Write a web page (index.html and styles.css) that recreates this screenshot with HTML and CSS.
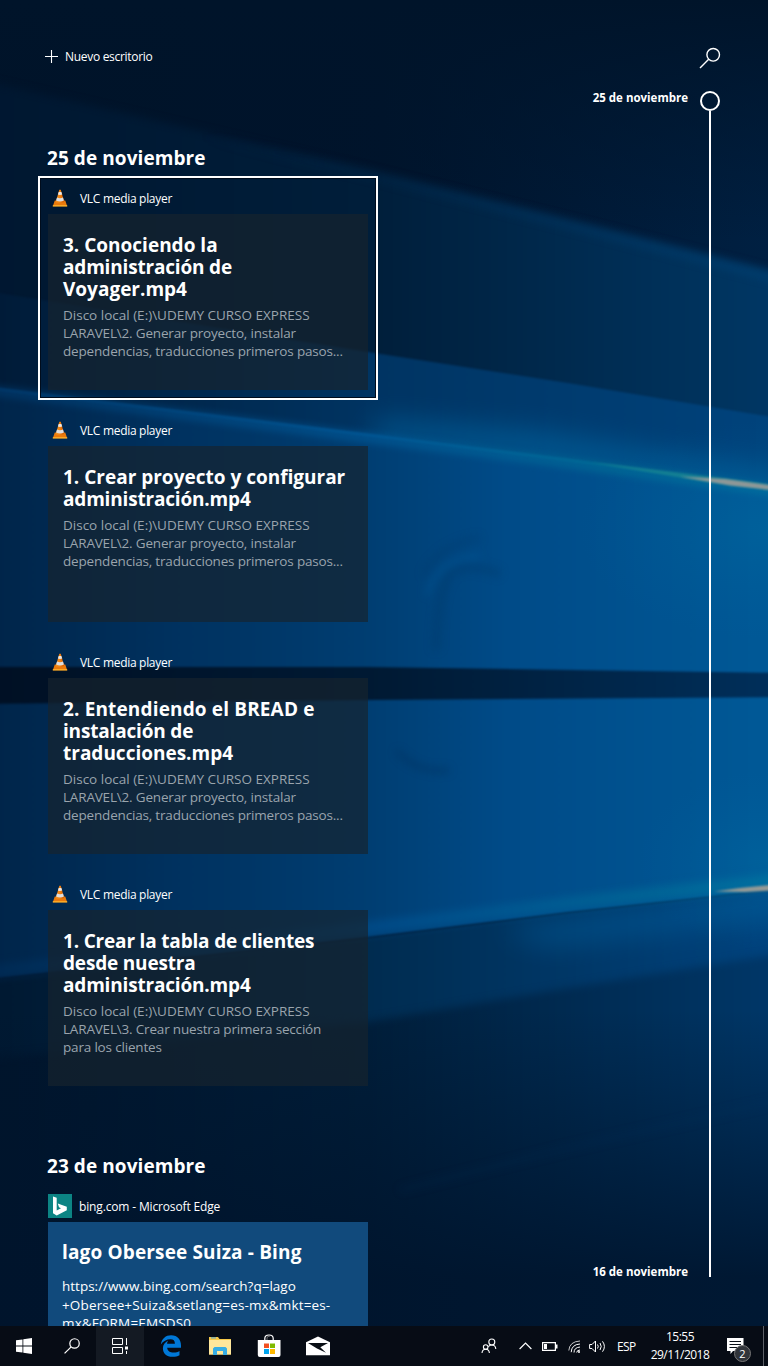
FILE: index.html
```html
<!DOCTYPE html>
<html lang="es">
<head>
<meta charset="utf-8">
<title>Vista de tareas</title>
<link rel="stylesheet" href="styles.css">
</head>
<body>
<svg class="wallpaper" viewBox="0 0 768 1366" preserveAspectRatio="none" aria-hidden="true">
  <defs>
    <linearGradient id="base" x1="0" x2="1" y1="0" y2="0"><stop offset="0" stop-color="#001228"/><stop offset=".5" stop-color="#00142c"/><stop offset="1" stop-color="#002042"/></linearGradient>
    <linearGradient id="topfade" x1="0" x2="0" y1="0" y2="1"><stop offset="0" stop-color="#00142a"/><stop offset="1" stop-color="#00142a" stop-opacity="0"/></linearGradient>
    <linearGradient id="bandA" x1="0" x2="1" y1="0" y2="0"><stop offset="0" stop-color="#001730"/><stop offset=".48" stop-color="#001e3a"/><stop offset="1" stop-color="#003866"/></linearGradient>
    <linearGradient id="edgeA" gradientUnits="userSpaceOnUse" x1="200" x2="768" y1="0" y2="0"><stop offset="0" stop-color="#004a80" stop-opacity="0"/><stop offset="1" stop-color="#004a80" stop-opacity=".4"/></linearGradient>
    <linearGradient id="bandB" x1="0" x2="1" y1="0" y2="0"><stop offset="0" stop-color="#001a36"/><stop offset=".48" stop-color="#003462"/><stop offset="1" stop-color="#00447e"/></linearGradient>
    <linearGradient id="pane" x1="0" x2="1" y1="0" y2="0"><stop offset="0" stop-color="#002448"/><stop offset=".25" stop-color="#003260"/><stop offset=".48" stop-color="#003e72"/><stop offset=".65" stop-color="#004b88"/><stop offset="1" stop-color="#005a98"/></linearGradient>
    <linearGradient id="lowerA" x1="0" x2="1" y1="0" y2="0"><stop offset="0" stop-color="#001830"/><stop offset=".48" stop-color="#002c50"/><stop offset="1" stop-color="#004480"/></linearGradient>
    <linearGradient id="lowerB" x1="0" x2="1" y1="0" y2="0"><stop offset="0" stop-color="#00142b"/><stop offset=".48" stop-color="#001e3a"/><stop offset="1" stop-color="#00386a"/></linearGradient>
    <linearGradient id="bar" x1="0" x2="1" y1="0" y2="0"><stop offset="0" stop-color="#001024"/><stop offset=".5" stop-color="#001a34"/><stop offset="1" stop-color="#00305c"/></linearGradient>
    <linearGradient id="ray" gradientUnits="userSpaceOnUse" x1="0" x2="768" y1="0" y2="0"><stop offset="0" stop-color="#003c70"/><stop offset=".48" stop-color="#005c9c"/><stop offset=".8" stop-color="#007298"/><stop offset="1" stop-color="#0078a0"/></linearGradient>
    <linearGradient id="lowray" gradientUnits="userSpaceOnUse" x1="0" x2="768" y1="0" y2="0"><stop offset="0" stop-color="#002e5a"/><stop offset=".5" stop-color="#005090"/><stop offset=".85" stop-color="#006c98"/><stop offset="1" stop-color="#0078a0"/></linearGradient>
    <linearGradient id="floor" x1="0" x2="0" y1="0" y2="1"><stop offset="0" stop-color="#00142c" stop-opacity="0"/><stop offset=".75" stop-color="#00142c"/><stop offset="1" stop-color="#00142c"/></linearGradient>
    <radialGradient id="glow"><stop offset="0" stop-color="#0078a8" stop-opacity=".65"/><stop offset="1" stop-color="#0068a4" stop-opacity="0"/></radialGradient>
    <filter id="b1" color-interpolation-filters="sRGB" filterUnits="userSpaceOnUse" x="-40" y="0" width="860" height="1366"><feGaussianBlur stdDeviation="1"/></filter>
    <filter id="b3" color-interpolation-filters="sRGB" filterUnits="userSpaceOnUse" x="-40" y="0" width="860" height="1366"><feGaussianBlur stdDeviation="4"/></filter>
    <filter id="b12" color-interpolation-filters="sRGB" filterUnits="userSpaceOnUse" x="-40" y="0" width="860" height="1366"><feGaussianBlur stdDeviation="14"/></filter>
  </defs>
  <rect width="768" height="1366" fill="url(#base)"/>
  <rect width="768" height="240" fill="url(#topfade)"/>
  <path d="M-20 80 L368 170 L568 220 L790 276 V440 H-20Z" fill="url(#bandA)" filter="url(#b3)"/>
  <path d="M200 136 L368 174 L568 224 L790 281" fill="none" stroke="url(#edgeA)" stroke-width="9" filter="url(#b3)"/>
  <path d="M-20 290 L368 352 L568 383 L790 420 V520 H-20Z" fill="url(#bandB)" filter="url(#b1)"/>
  <path d="M380 420 L540 432 L790 474 V500 L368 440Z" fill="#0064a0" opacity=".65" filter="url(#b12)"/>
  <path d="M-20 386 L368 434 L568 459 L790 489 V888 L568 912 L368 937 L-20 980Z" fill="url(#pane)" filter="url(#b1)"/>
  <path d="M-20 389 L368 438 L568 463 L790 493" fill="none" stroke="url(#ray)" stroke-width="8" opacity=".8" filter="url(#b3)"/>
  <path d="M-20 387 L368 435 L568 460 L790 490" fill="none" stroke="url(#ray)" stroke-width="2.5" opacity=".7" filter="url(#b1)"/>
  <path d="M-20 981 L368 938 L568 913 L790 888 V1130 H-20Z" fill="url(#lowerA)" filter="url(#b1)"/>
  <path d="M500 930 L790 890 V915 L550 945Z" fill="#0064a4" opacity=".5" filter="url(#b12)"/>
  <path d="M-20 1060 L368 1022 L568 988 L790 952 V1400 H-20Z" fill="url(#lowerB)" filter="url(#b3)"/>
  <path d="M-20 1010 H790 V1366 H-20Z" fill="url(#floor)" opacity=".88"/>
  <path d="M400 1190 L568 1148 L790 1098" fill="none" stroke="#00386a" stroke-opacity=".16" stroke-width="5" filter="url(#b3)"/>
  <path d="M-20 973 L368 928 L568 903 L790 879" fill="none" stroke="url(#lowray)" stroke-width="13" opacity=".7" filter="url(#b3)"/>
  <ellipse cx="768" cy="530" rx="190" ry="110" fill="url(#glow)" opacity=".4"/>
  <ellipse cx="768" cy="860" rx="130" ry="90" fill="url(#glow)" opacity=".4"/>
  <path d="M-20 667 H368 L790 673 V697 L368 700 L-20 704Z" fill="url(#bar)" filter="url(#b1)"/>
  <g fill="none" filter="url(#b3)"><path d="M436 650 Q438 585 452 572 Q470 562 500 574" stroke="#003767" stroke-opacity=".4" stroke-width="7"/><path d="M427 595 Q435 560 480 556" stroke="#0062a4" stroke-opacity=".4" stroke-width="4"/><path d="M424 575 Q438 545 480 538" stroke="#003767" stroke-opacity=".35" stroke-width="5"/><path d="M397 751 Q418 774 449 770" stroke="#002c58" stroke-opacity=".55" stroke-width="4"/></g>
  <path d="M590 462 L700 475 L768 484 V490 L700 481Z" fill="#25928e" opacity=".5" filter="url(#b1)"/>
  <path d="M680 476.5 L725 479 L790 488 V492 L730 485.5Z" fill="#a49c98" opacity=".85" filter="url(#b1)"/>
  <path d="M714 891.5 L740 888 L790 883 V889.5 L745 892Z" fill="#b0a394" opacity=".85" filter="url(#b1)"/>
</svg>

<svg class="sprite" aria-hidden="true">
  <defs>
    <linearGradient id="cone" x1="0" x2="1"><stop offset="0" stop-color="#f7941d"/><stop offset=".5" stop-color="#f08010"/><stop offset="1" stop-color="#d45c00"/></linearGradient>
    <symbol id="vlc" viewBox="0 0 16 18"><path d="M2.8 11.5 H13.2 L15.2 17.3 H.8Z" fill="#ea7a0c"/><path d="M.8 16.2 H15.2 V17.5 H.8Z" fill="#ffb52b"/><path d="M7.3 .8 H8.8 L12.2 13 Q8 15.3 3.8 13Z" fill="url(#cone)"/><path d="M6.7 3 H9.4 L10.2 5.6 Q8 6.5 5.9 5.6Z" fill="#e8e8e8"/><path d="M5 8.6 Q8 10 11 8.6 L11.9 11.5 Q8 13.6 4.1 11.5Z" fill="#dedede"/></symbol>
  </defs>
</svg>

<div class="desktop">
  <main class="task-view">
    <section class="activities">
      <button class="new-desktop"><svg width="13" height="13" viewBox="0 0 13 13"><path d="M6.5 0V13M0 6.5H13" stroke="#fff" stroke-width="1.1"/></svg><span>Nuevo escritorio</span></button>

      <h2 class="day first-day">25 de noviembre</h2>
      <div class="activity-list">
        <article class="activity selected">
          <header class="app"><svg class="app-icon"><use href="#vlc"/></svg><span>VLC media player</span></header>
          <div class="card"><h3>3. Conociendo la<br><span class="tight">administración de</span><br>Voyager.mp4</h3><p>Disco local (E:)\UDEMY CURSO EXPRESS<br><span class="tight">LARAVEL\2. Generar proyecto, instalar<br>dependencias, traducciones primeros pasos...</span></p></div>
        </article>
        <article class="activity">
          <header class="app"><svg class="app-icon"><use href="#vlc"/></svg><span>VLC media player</span></header>
          <div class="card"><h3>1. Crear proyecto y configurar<br><span class="tight">administración.mp4</span></h3><p>Disco local (E:)\UDEMY CURSO EXPRESS<br><span class="tight">LARAVEL\2. Generar proyecto, instalar<br>dependencias, traducciones primeros pasos...</span></p></div>
        </article>
        <article class="activity">
          <header class="app"><svg class="app-icon"><use href="#vlc"/></svg><span>VLC media player</span></header>
          <div class="card"><h3><span class="loose">2. Entendiendo el BREAD e</span><br><span class="tight">instalación de</span><br>traducciones.mp4</h3><p>Disco local (E:)\UDEMY CURSO EXPRESS<br><span class="tight">LARAVEL\2. Generar proyecto, instalar<br>dependencias, traducciones primeros pasos...</span></p></div>
        </article>
        <article class="activity">
          <header class="app"><svg class="app-icon"><use href="#vlc"/></svg><span>VLC media player</span></header>
          <div class="card"><h3 class="tight">1. Crear la tabla de clientes<br>desde nuestra<br>administración.mp4</h3><p>Disco local (E:)\UDEMY CURSO EXPRESS<br><span class="tight">LARAVEL\3. Crear nuestra primera sección<br>para los clientes</span></p></div>
        </article>
      </div>

      <h2 class="day next-day">23 de noviembre</h2>
      <article class="activity web">
        <header class="app"><svg class="bing-icon" viewBox="0 0 24 24"><rect width="24" height="24" fill="#0c8484"/><path d="M5 2.5 L8.7 3.8 V16.6 L13 14.2 L11 13.2 L9.8 9.6 L18.8 12.8 V16.2 L8.7 21.5 L5 19.2Z" fill="#fff"/></svg><span>bing.com - Microsoft Edge</span></header>
        <div class="card"><h3 class="loose">lago Obersee Suiza - Bing</h3><p>https://www.bing.com/search?q=lago<br><span class="loose">+Obersee+Suiza&amp;setlang=es-mx&amp;mkt=es-<br>mx&amp;FORM=EMSDS0</span></p></div>
      </article>
    </section>

    <aside class="timeline">
      <div class="dates"><span>25 de noviembre</span><span>16 de noviembre</span></div>
      <div class="track">
        <svg class="search" width="22" height="22" viewBox="0 0 22 22" fill="none" stroke="#fff" stroke-width="1.4"><circle cx="14.2" cy="7.8" r="6.3"/><path d="M9.7 12.3 L1 21"/></svg>
        <div class="knob"></div>
        <div class="line"></div>
      </div>
    </aside>
  </main>

  <footer class="taskbar">
    <div class="apps">
      <div class="slot"><svg width="16" height="16" viewBox="0 0 16 16" fill="#fff"><path d="M0 2.3 L6.5 1.4 V7.5 H0ZM7.3 1.3 L16 0 V7.5 H7.3ZM0 8.4 H6.5 V14.6 L0 13.7ZM7.3 8.4 H16 V16 L7.3 14.7Z"/></svg></div>
      <div class="slot"><svg width="16" height="16" viewBox="0 0 17 17" fill="none" stroke="#fff" stroke-width="1.3"><circle cx="11.2" cy="5.8" r="5"/><path d="M7.6 9.4 L.6 16.4"/></svg></div>
      <div class="slot active"><svg width="16" height="16" viewBox="0 0 16 16" fill="none" stroke="#fff"><path d="M.5 .5H10.5V6.5H.5ZM.5 9.5H10.5V15.5H.5ZM14.5 0V7M14.5 13V16"/><path d="M13 8.5H16V11.5H13Z" fill="#fff" stroke="none"/></svg></div>
      <div class="slot pinned"><svg width="22" height="22" viewBox="0 0 22 22"><path d="M.8 9.6 C1.7 3.5 5.8 .2 11.1 .2 C17.7 .2 21 5 21 10.2 V12.7 H7.2 C7.5 16.2 10.3 17.5 13.4 17.5 C16 17.5 18 16.8 19.5 15.9 V20.2 C17.6 21.2 15.3 21.8 12.5 21.8 C6.4 21.8 2.9 18.2 2.9 13.2 C2.9 9.6 5 7 8.2 5.4 C7.5 6.4 7.2 7.3 7.1 8.7 H14.9 C14.9 5.8 13.4 4.3 10.5 4.3 C6.6 4.3 3 6.3 .8 9.6Z" fill="#0078d7"/></svg></div>
      <div class="slot pinned"><svg width="22" height="18" viewBox="0 0 22 18"><path d="M0 0H9L10.5 2H22V17.5H0Z" fill="#f6c949"/><path d="M0 3H22V17.5H0Z" fill="#ffe79b"/><path d="M2 .9H7" stroke="#4a9fd6" stroke-width="1"/><path d="M4 18V11.5L5.5 10H16.5L18 11.5V18H14V14H8V18Z" fill="#37ade4"/></svg></div>
      <div class="slot pinned"><svg width="24" height="24" viewBox="0 0 24 24"><path d="M7.8 8V4.5C7.8 2 9.5 1 12 1S16.2 2 16.2 4.5V8" fill="none" stroke="#fff" stroke-width="1.2"/><path d="M10 8V4Q10 2 13 2" fill="none" stroke="#999" stroke-width=".7"/><path d="M.8 6H23.5V21Q23.5 23 21.5 23H2.8Q.8 23 .8 21Z" fill="#fff"/><path d="M7 9.5H12V14H7Z" fill="#f25022"/><path d="M13 9.5H18V14H13Z" fill="#7fba00"/><path d="M7 15H12V20H7Z" fill="#00a4ef"/><path d="M13 15H18V20H13Z" fill="#ffb900"/></svg></div>
      <div class="slot pinned"><svg width="24" height="20" viewBox="0 0 24 20"><path d="M0 6.3 L12 .5 L24 6.3 V19.3H0Z" fill="#fff"/><path d="M2 7 H22 L14.3 11.3 L20 16.8 L11 12.5Z" fill="#080d14"/></svg></div>
    </div>
    <div class="tray">
      <svg class="people" width="16" height="16" viewBox="0 0 16 16" fill="none" stroke="#fff" stroke-width="1.1"><circle cx="10.8" cy="4" r="3"/><circle cx="4.7" cy="9" r="2.3"/><path d="M1 15Q1.4 11.3 4.7 11.3T8.4 15M7.4 8.7Q8.5 7 10.8 7Q14.5 7 14.8 11"/></svg>
      <svg class="chevron" width="13" height="8" viewBox="0 0 13 8" fill="none" stroke="#fff" stroke-width="1.2"><path d="M.6 7 L6.5 1.1 L12.4 7"/></svg>
      <svg class="battery" width="16" height="9" viewBox="0 0 16 9"><path d="M.6 .6H13.4V8.4H.6Z" fill="none" stroke="#fff" stroke-width="1.2"/><path d="M2 2H5V7H2ZM14 2.5H15.5V6.5H14Z" fill="#fff"/></svg>
      <svg class="wifi" width="13" height="13" viewBox="0 0 13 13" fill="none" stroke="#fff"><path d="M.8 10.5Q1.5 1.5 12 1" stroke-opacity=".75"/><path d="M3.2 12.2Q3.5 4.5 12 4M6 12.5Q6 7.6 12 7M8.7 12.5Q8.8 10.2 12 10"/><circle cx="11" cy="12" r="1" fill="#fff" stroke="none"/></svg>
      <svg class="volume" width="17" height="13" viewBox="0 0 17 13" fill="none" stroke="#fff"><path d="M.6 4.5H3L6.5 1V12L3 8.5H.6ZM8.5 4.5Q10 6.5 8.5 8.5M11 3Q13.4 6.5 11 10M13.5 1.3Q17.3 6.5 13.5 11.7"/></svg>
      <span class="lang">ESP</span>
      <div class="clock"><span>15:55</span><span>29/11/2018</span></div>
      <div class="notices"><svg width="17" height="17" viewBox="0 0 17 17"><path d="M0 0H16.5V13H6L3.5 16V13H0Z" fill="#fff"/><path d="M2.5 3.5H14M2.5 6.5H14M2.5 9.5H10" stroke="#0a1018"/></svg><span class="badge">2</span></div>
      <div class="peek"></div>
    </div>
  </footer>
</div>
</body>
</html>
```
FILE: styles.css
```css
* { box-sizing: border-box; margin: 0; padding: 0; }
body { width: 768px; height: 1366px; overflow: hidden; background: #00142c; color: #fff; font-family: "Open Sans", "Noto Sans", sans-serif; }
.wallpaper { position: absolute; inset: 0; width: 768px; height: 1366px; z-index: -1; }
.sprite { position: absolute; width: 0; height: 0; }
svg { display: block; flex: none; }

.desktop { display: grid; grid-template-rows: 1326px 40px; height: 1366px; }
.task-view { display: flex; justify-content: space-between; overflow: hidden; }
.activities { width: 340px; margin-left: 38px; padding-top: 44px; }

.new-desktop { display: flex; align-items: center; gap: 7px; height: 24px; padding-left: 7px; background: none; border: 0; color: #fff; font: 12px "Open Sans", sans-serif; letter-spacing: -.3px; }

.day { height: 36px; padding-left: 9px; font-size: 19px; line-height: 36px; font-weight: 700; letter-spacing: .07px; white-space: nowrap; }
.first-day { margin-top: 72px; }
.next-day { margin-top: 52px; }

.activity-list { display: flex; flex-direction: column; gap: 8px; }
.activity { padding: 8px; border: 2px solid transparent; }
.activity.selected { border-color: #fff; box-shadow: inset 0 0 0 1px #000c1c; }
.app { display: flex; align-items: center; height: 24px; margin-bottom: 4px; font-size: 12px; letter-spacing: -.3px; }
.web .app { letter-spacing: -.15px; }
.app-icon { width: 16px; height: 18px; margin: 0 12px 0 4px; }
.bing-icon { width: 24px; height: 24px; margin-right: 7px; }

.card { height: 176px; padding: 20px 15px; background: rgba(22, 35, 45, .68); white-space: nowrap; }
.card h3 { font-size: 19px; line-height: 22px; font-weight: 700; }
.card p { margin-top: 6px; font-size: 13.5px; line-height: 18px; color: #9aa4ad; }
.card .tight { letter-spacing: -.18px; }
.card .loose { letter-spacing: .15px; }
.web .card { padding: 19px 14px; background: #114a7c; }
.web .card p { margin-top: 14px; line-height: 18.5px; color: #fff; }

.timeline { display: flex; gap: 11px; height: 1280px; margin-right: 47px; }
.dates { display: flex; flex-direction: column; justify-content: space-between; padding-top: 90px; font-size: 11.5px; line-height: 16px; font-weight: 700; text-align: right; white-space: nowrap; }
.track { display: flex; flex-direction: column; align-items: center; width: 22px; padding: 47px 0 3px; }
.knob { width: 20px; height: 20px; margin-top: 22px; border: 2px solid #fff; border-radius: 50%; }
.line { width: 2px; flex: 1; background: #fff; }

.taskbar { display: flex; justify-content: space-between; background: #070c15; }
.apps, .tray { display: flex; align-items: center; }
.slot { display: grid; place-items: center; width: 48px; height: 40px; }
.slot.active { background: #141a23; }
.slot.pinned { width: 49px; }
.active + .pinned { margin-left: 2px; }
.people { margin-right: 22px; }
.chevron { margin-right: 10px; }
.battery { margin-right: 10px; }
.wifi { margin-right: 8px; }
.volume { margin-right: 11px; }
.lang { width: 19px; font-size: 12px; letter-spacing: -.6px; }
.clock { display: flex; flex-direction: column; align-items: center; width: 60px; margin-left: 14px; font-size: 12px; line-height: 18px; letter-spacing: -.5px; }
.notices { position: relative; margin-left: 17px; width: 36px; }
.badge { position: absolute; left: 7px; top: 7px; width: 17px; height: 17px; border: 1px solid #777; border-radius: 50%; background: #30343a; font-size: 11px; line-height: 15px; text-align: center; }
.peek { width: 5px; height: 40px; border-left: 1px solid #5c6067; }
```
